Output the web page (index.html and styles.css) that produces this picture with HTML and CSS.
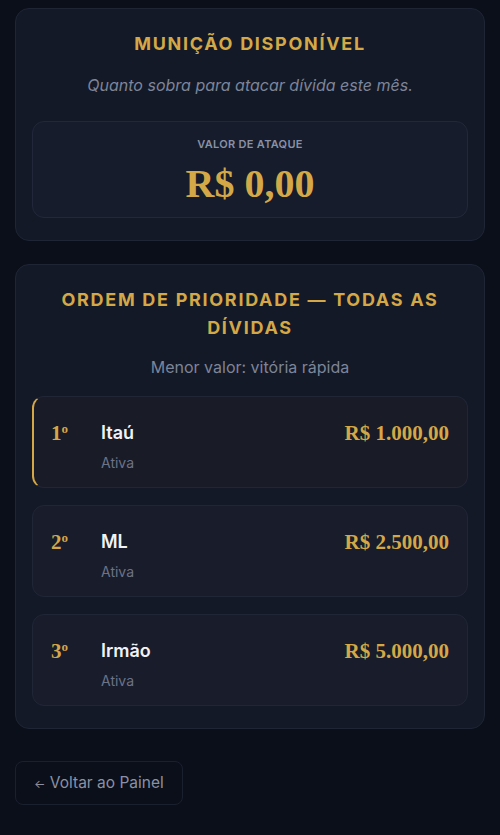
FILE: index.html
```html
<!doctype html>
<html lang="pt-BR">
<head>
    <meta charset="UTF-8">
    <meta name="viewport" content="width=device-width, initial-scale=1.0">
    <title>Munição</title>
    <link rel="stylesheet" href="styles.css">
</head>
<body>
    <div class="page">
        <!--munição-->
        <section class="card">
            <h2 class="card-title">MUNIÇÃO DISPONÍVEL</h2>
            <p class="card-sub italic">Quanto sobra para atacar dívida este mês.</p>
            <div class="attack">
                <div class="attack-label">VALOR DE ATAQUE</div>
                <div class="attack-value">R$ 0,00</div>
            </div>
        </section>

        <!--prioridade-->
        <section class="card">
            <h2 class="card-title">ORDEM DE PRIORIDADE — TODAS AS DÍVIDAS</h2>
            <p class="card-sub list-sub">Menor valor: vitória rápida</p>
            <div class="debts">
                <div class="debt on">
                    <div class="rank">1<sup>o</sup></div>
                    <div class="debt-info">
                        <div class="debt-name">Itaú</div>
                        <div class="debt-status">Ativa</div>
                    </div>
                    <div class="debt-amount">R$ 1.000,00</div>
                </div>
                <div class="debt">
                    <div class="rank">2<sup>o</sup></div>
                    <div class="debt-info">
                        <div class="debt-name">ML</div>
                        <div class="debt-status">Ativa</div>
                    </div>
                    <div class="debt-amount">R$ 2.500,00</div>
                </div>
                <div class="debt">
                    <div class="rank">3<sup>o</sup></div>
                    <div class="debt-info">
                        <div class="debt-name">Irmão</div>
                        <div class="debt-status">Ativa</div>
                    </div>
                    <div class="debt-amount">R$ 5.000,00</div>
                </div>
            </div>
        </section>

        <a class="back" href="javascript:void(0)"><span class="arrow">←</span> Voltar ao Painel</a>
    </div>
</body>
</html>
```

FILE: styles.css
```css
*{
    padding: 0;
    margin: 0;
    box-sizing: border-box;
}
a{
    text-decoration: none;
}
html,body{
    height: 100%;
}
body{
    background: #0b0f1a;
    font-family: Inter, "Noto Sans", sans-serif;
    color: #e8eaf0;
}
.page{
    padding: 8px 15px;
    display: flex;
    flex-direction: column;
    align-items: stretch;
}
.card{
    background: #131927;
    border: 1px solid #1f2535;
    border-radius: 14px;
    padding: 21px 16px 22px;
    margin-bottom: 23px;
    text-align: center;
}
.card-title{
    color: #d4a846;
    font-size: 18px;
    line-height: 28px;
    font-weight: 700;
    letter-spacing: 1.7px;
    padding: 0 16px;
}
.card-sub{
    margin-top: 16px;
    color: #7d8599;
    font-size: 16px;
    line-height: 22px;
}
.card-sub.italic{
    font-style: italic;
}
.attack{
    margin-top: 25px;
    background: #161c2b;
    border: 1px solid #222839;
    border-radius: 12px;
    padding: 15px 0 11px;
}
.attack-label{
    font-size: 11px;
    line-height: 14px;
    font-weight: 600;
    color: #8a91a6;
    letter-spacing: 0.3px;
}
.attack-value{
    margin-top: 11px;
    font-family: "Liberation Serif", "DejaVu Serif", serif;
    font-weight: 700;
    font-size: 40px;
    line-height: 44px;
    color: #d4a846;
}
.list-sub{
    margin-top: 14px;
}
.debts{
    margin-top: 18px;
    display: flex;
    flex-direction: column;
    gap: 17px;
    text-align: left;
}
.debt{
    display: flex;
    align-items: flex-start;
    height: 92px;
    padding: 24px 18px 0;
    background: #181c2b;
    border: 1px solid #212636;
    border-radius: 12px;
}
.debt.on{
    background: #191b27;
    border-left: 2px solid #d4a846;
    padding-left: 17px;
}
.rank{
    width: 50px;
    font-family: "Liberation Serif", "DejaVu Serif", serif;
    font-weight: 700;
    font-size: 21px;
    line-height: 24px;
    color: #d4a846;
}
.rank sup{
    font-size: 13px;
    line-height: 0;
    vertical-align: 7px;
}
.debt-info{
    flex: 1;
}
.debt-name{
    font-size: 18px;
    line-height: 24px;
    font-weight: 600;
    color: #f1f2f6;
}
.debt-status{
    margin-top: 8px;
    font-size: 14px;
    line-height: 20px;
    color: #6c7387;
}
.debt-amount{
    font-family: "Liberation Serif", "DejaVu Serif", serif;
    font-weight: 700;
    font-size: 21px;
    line-height: 24px;
    color: #d4a846;
}
.back{
    align-self: flex-start;
    margin-top: 9px;
    height: 44px;
    line-height: 42px;
    padding: 0 18px;
    border: 1px solid #1b2030;
    border-radius: 8px;
    color: #8a91a6;
    font-size: 15.5px;
}
.back .arrow{
    font-size: 12px;
}
```
